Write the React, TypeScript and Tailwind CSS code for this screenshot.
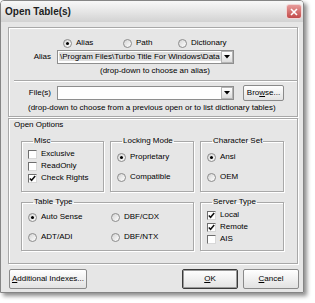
import type { ReactNode } from 'react';

const font = "font-['Liberation_Sans',Arial,sans-serif]";

function Radio({ checked }: { checked?: boolean }) {
  return (
    <span className="flex h-[9px] w-[9px] shrink-0 items-center justify-center rounded-full border border-[#8c8c8c] bg-linear-to-br from-[#d4d4d4] to-white">
      {checked && <span className="h-[3px] w-[3px] rounded-full bg-black" />}
    </span>
  );
}

function Check({ checked }: { checked?: boolean }) {
  return (
    <span className="flex h-[9px] w-[9px] shrink-0 items-center justify-center border border-t-[#6e6e6e] border-l-[#6e6e6e] border-b-[#d8d8d8] border-r-[#d8d8d8] bg-white">
      {checked && (
        <svg width="7" height="7" viewBox="0 0 7 7">
          <path d="M0.8 3.4 L2.6 5.3 L6.2 1" fill="none" stroke="#111" strokeWidth="1.5" />
        </svg>
      )}
    </span>
  );
}

function Opt({ children, radio, checked }: { children: ReactNode; radio?: boolean; checked?: boolean }) {
  return (
    <div className="flex h-[12px] items-center gap-[4px]">
      {radio ? <Radio checked={checked} /> : <Check checked={checked} />}
      <span>{children}</span>
    </div>
  );
}

function Group({ title, className, children }: { title: string; className: string; children: ReactNode }) {
  return (
    <fieldset className={`border border-[#a8a8a8] shadow-[inset_1px_1px_0_#fff,1px_1px_0_#fff] ${className}`}>
      <legend className="ml-[5px] px-[1px] leading-[12px]">{title}</legend>
      {children}
    </fieldset>
  );
}

function Combo({ value, grey }: { value?: string; grey?: boolean }) {
  return (
    <div className="flex h-[14px] w-[177px] items-center border border-[#8e8e8e] bg-white pl-[1px]">
      <div className="flex-1 overflow-hidden whitespace-nowrap">
        {value && <span className={grey ? 'bg-[#dedede] px-[1px]' : ''}>{value}</span>}
      </div>
      <div className="flex h-[12px] w-[12px] items-center justify-center border border-[#b4b4b4] bg-linear-to-b from-white to-[#dcdcdc]">
        <svg width="6" height="4" viewBox="0 0 6 4">
          <path d="M0 0 H6 L3 3.5 Z" fill="#000" />
        </svg>
      </div>
    </div>
  );
}

function Btn({ children, w, def }: { children: ReactNode; w: string; def?: boolean }) {
  return (
    <button
      className={`flex h-[20px] ${w} items-center justify-center rounded-[2px] border bg-linear-to-b from-white to-[#e2e2e2] ${
        def ? 'border-[#3a3a3a] shadow-[inset_0_0_0_1px_#9a9a9a]' : 'border-[#8a8a8a]'
      }`}
    >
      {children}
    </button>
  );
}

export default function App() {
  return (
    <div className={`h-[303px] w-[315px] bg-white text-[8px] leading-[12px] text-black ${font}`}>
      <div className="flex h-[293px] w-[304px] flex-col overflow-hidden rounded-t-[4px] border border-[#858585] shadow-[3px_3px_4px_rgba(0,0,0,0.45)]">
        {/* title bar */}
        <div className="flex h-[21px] shrink-0 items-center justify-between bg-linear-to-b from-[#f8f8f8] via-[#e6e6e6] to-[#d2d2d2] pl-[4px] pr-[1px]">
          <span className="text-[10px] font-bold text-[#1e1e1e]">Open Table(s)</span>
          <div className="flex h-[15px] w-[16px] items-center justify-center rounded-[3px] border border-[#f2d6d6] bg-linear-to-b from-[#e69a9a] to-[#c24a4a]">
            <svg width="8" height="8" viewBox="0 0 8 8">
              <path d="M1 1 L7 7 M7 1 L1 7" stroke="#fff" strokeWidth="1.6" />
            </svg>
          </div>
        </div>

        {/* body */}
        <div className="flex flex-1 flex-col bg-[#e6e6e6] pl-[7px] pr-[5px] pt-[5px]">
          {/* alias / files panel */}
          <div className="h-[90px] border border-[#a8a8a8] shadow-[inset_1px_1px_0_#fff,1px_1px_0_#fff]">
            <div className="mt-[9px] flex h-[12px] items-center pl-[54px]">
              <div className="w-[60px]"><Opt radio checked>Alias</Opt></div>
              <div className="w-[55px]"><Opt radio>Path</Opt></div>
              <Opt radio>Dictionary</Opt>
            </div>
            <div className="mt-[1px] flex h-[14px] items-center">
              <span className="w-[48px] pr-[6px] text-right">Alias</span>
              <Combo value="\Program Files\Turbo Title For Windows\Data" grey />
            </div>
            <div className="mt-[1px] pl-[91px]">(drop-down to choose an alias)</div>
            <div className="ml-[5px] mt-[3px] h-[2px] border-t border-b border-t-[#a8a8a8] border-b-white" />
            <div className="mt-[3px] flex h-[16px] items-center">
              <span className="w-[48px] pr-[6px] text-right">File(s)</span>
              <Combo />
              <div className="ml-[9px]">
                <Btn w="w-[41px] !h-[16px]">
                  Bro<span className="underline">w</span>se...
                </Btn>
              </div>
            </div>
            <div className="mt-[1px] pl-[19px]">
              (drop-down to choose from a previous open or to list dictionary tables)
            </div>
          </div>

          {/* open options */}
          <div className="mt-[1px] h-[146px] border border-[#a8a8a8] shadow-[inset_1px_1px_0_#fff,1px_1px_0_#fff]">
            <div className="pl-[5px]">Open Options</div>
            <div className="mt-[4px] flex gap-[6px] pl-[12px]">
              <Group title="Misc" className="h-[57px] w-[83px] pl-[6px] pt-[1px]">
                <Opt>Exclusive</Opt>
                <Opt>ReadOnly</Opt>
                <Opt checked>Check Rights</Opt>
              </Group>
              <Group title="Locking Mode" className="h-[57px] w-[84px] pl-[6px] pt-[4px]">
                <Opt radio checked>Proprietary</Opt>
                <div className="mt-[8px]"><Opt radio>Compatible</Opt></div>
              </Group>
              <Group title="Character Set" className="h-[57px] w-[84px] pl-[6px] pt-[4px]">
                <Opt radio checked>Ansi</Opt>
                <div className="mt-[8px]"><Opt radio>OEM</Opt></div>
              </Group>
            </div>
            <div className="mt-[4px] flex gap-[6px] pl-[12px]">
              <Group title="Table Type" className="h-[55px] w-[173px] pl-[6px] pt-[3px]">
                <div className="grid grid-cols-[83px_1fr] gap-y-[8px]">
                  <Opt radio checked>Auto Sense</Opt>
                  <Opt radio>DBF/CDX</Opt>
                  <Opt radio>ADT/ADI</Opt>
                  <Opt radio>DBF/NTX</Opt>
                </div>
              </Group>
              <Group title="Server Type" className="h-[55px] w-[84px] pl-[6px] pt-[1px]">
                <Opt checked>Local</Opt>
                <Opt checked>Remote</Opt>
                <Opt>AIS</Opt>
              </Group>
            </div>
          </div>

          {/* buttons */}
          <div className="-mr-[1px] mt-[5px] flex gap-[5px] pl-[1px]">
            <Btn w="w-[78px]">
              <span><span className="underline">A</span>dditional Indexes...</span>
            </Btn>
            <div className="flex-1" />
            <Btn w="w-[56px]" def>
              <span><span className="underline">O</span>K</span>
            </Btn>
            <Btn w="w-[56px]">
              <span><span className="underline">C</span>ancel</span>
            </Btn>
          </div>
        </div>
      </div>
    </div>
  );
}
